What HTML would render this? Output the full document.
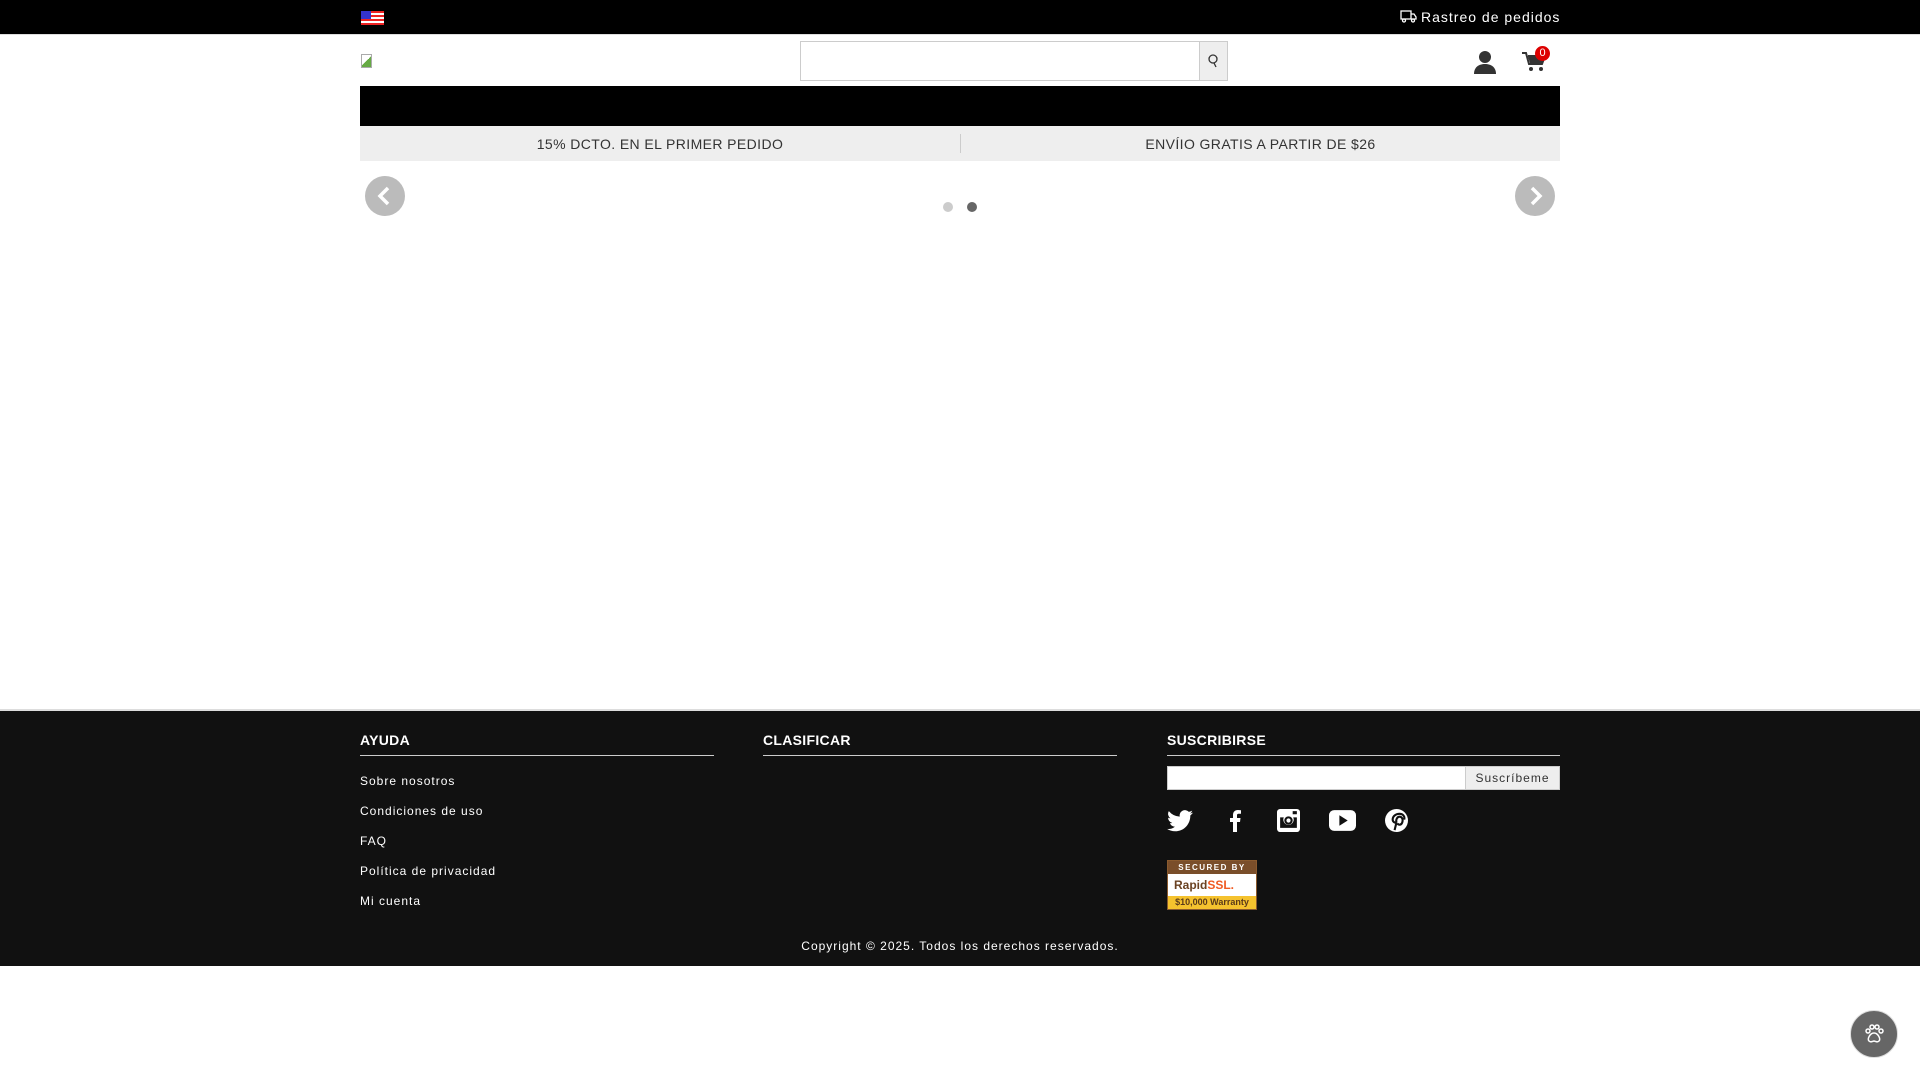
<!DOCTYPE html>
<html><head><meta charset="utf-8"><style>
*{margin:0;padding:0;box-sizing:border-box}
body{width:1920px;height:1080px;background:#fff;font-family:"Liberation Sans",sans-serif;position:relative;overflow:hidden}
.a{position:absolute}
.top{left:0;top:0;width:1920px;height:35px;background:#000;border-bottom:1px solid #ddd}
.ft{left:0;top:709px;width:1920px;height:257px;background:#111;border-top:2px solid #ddd}
.h{color:#fff;font-weight:bold;font-size:14px;letter-spacing:.3px}
.ln{left:0;height:1px;background:#ccc}
.lk{color:#fff;font-size:12px;letter-spacing:1px}
.arr{width:40px;height:40px;border-radius:50%;background:#bbb}
</style></head><body>
<div class="a top"></div>
<div class="a" style="left:361px;top:11px;width:23px;height:14px;background:repeating-linear-gradient(#e22 0 2px,#fff 2px 4px)"><div style="width:10px;height:8px;background:#33c"></div></div>
<div class="a" style="left:1400px;top:9px;color:#fff;font-size:14px;letter-spacing:1px">
<svg width="17" height="13" viewBox="0 0 17 13" style="vertical-align:-1px;margin-right:4px" fill="none" stroke="#fff" stroke-width="1.3"><rect x="1" y="1" width="10" height="8"/><path d="M11 4h3l2 3v2h-5"/><circle cx="4" cy="10.5" r="1.5"/><circle cx="13" cy="10.5" r="1.5"/></svg>Rastreo de pedidos</div>
<div class="a" style="left:361px;top:54px;width:11px;height:14px;border:1px solid #aaa;background:linear-gradient(135deg,#fff 50%,#6a4 50%)"></div>
<div class="a" style="left:800px;top:41px;width:428px;height:40px;border:1px solid #ccc;background:#fff"></div>
<div class="a" style="left:1199px;top:41px;width:29px;height:40px;border:1px solid #ccc;background:#eee"></div>
<svg class="a" style="left:1207px;top:54px" width="12" height="14" viewBox="0 0 12 14" fill="none" stroke="#333" stroke-width="1.3"><circle cx="6" cy="5" r="4"/><path d="M7 9l2 4"/></svg>
<svg class="a" style="left:1473px;top:50px" width="24" height="24" viewBox="0 0 24 24" fill="#333"><circle cx="12" cy="7" r="6"/><path d="M1 24c0-7 5-10 11-10s11 3 11 10z"/></svg>
<svg class="a" style="left:1522px;top:52px" width="24" height="20" viewBox="0 0 24 20" fill="#333"><path d="M0 1h4l3 11h13l3-8H6" stroke="#333" stroke-width="2" fill="none"/><path d="M6 5h16l-2 6H8z"/><circle cx="9" cy="17" r="2"/><circle cx="19" cy="17" r="2"/></svg>
<div class="a" style="left:1535px;top:46px;width:15px;height:15px;border-radius:50%;background:#d00;color:#fff;font-size:11px;text-align:center;line-height:15px">0</div>
<div class="a" style="left:360px;top:86px;width:1200px;height:40px;background:#000"></div>
<div class="a" style="left:360px;top:126px;width:1200px;height:35px;background:#eee"></div>
<div class="a" style="left:960px;top:134px;width:1px;height:19px;background:#ccc"></div>
<div class="a" style="left:360px;top:136px;width:600px;text-align:center;font-size:14px;color:#333;letter-spacing:.4px">15% DCTO. EN EL PRIMER PEDIDO</div>
<div class="a" style="left:961px;top:136px;width:599px;text-align:center;font-size:14px;color:#333;letter-spacing:.4px">ENVÍIO GRATIS A PARTIR DE $26</div>
<div class="a arr" style="left:365px;top:176px"><svg width="40" height="40" viewBox="0 0 40 40"><path d="M23 12l-8 8 8 8" stroke="#fff" stroke-width="3.5" fill="none"/></svg></div>
<div class="a arr" style="left:1515px;top:176px"><svg width="40" height="40" viewBox="0 0 40 40"><path d="M17 12l8 8-8 8" stroke="#fff" stroke-width="3.5" fill="none"/></svg></div>
<div class="a" style="left:943px;top:202px;width:10px;height:10px;border-radius:50%;background:#ccc"></div>
<div class="a" style="left:967px;top:202px;width:10px;height:10px;border-radius:50%;background:#666"></div>
<div class="a ft"></div>
<div class="a h" style="left:360px;top:732px">AYUDA</div>
<div class="a h" style="left:763px;top:732px">CLASIFICAR</div>
<div class="a h" style="left:1167px;top:732px">SUSCRIBIRSE</div>
<div class="a ln" style="left:360px;top:755px;width:354px"></div>
<div class="a ln" style="left:763px;top:755px;width:354px"></div>
<div class="a ln" style="left:1167px;top:755px;width:393px"></div>
<div class="a lk" style="left:360px;top:774px">Sobre nosotros</div>
<div class="a lk" style="left:360px;top:804px">Condiciones de uso</div>
<div class="a lk" style="left:360px;top:834px">FAQ</div>
<div class="a lk" style="left:360px;top:864px">Política de privacidad</div>
<div class="a lk" style="left:360px;top:894px">Mi cuenta</div>
<div class="a" style="left:1167px;top:766px;width:299px;height:24px;background:#fff;border:1px solid #ccc"></div>
<div class="a" style="left:1465px;top:766px;width:95px;height:24px;background:#eee;border:1px solid #ccc;font-size:12px;color:#333;text-align:center;line-height:22px;letter-spacing:1px">Suscríbeme</div>
<svg class="a" style="left:1167px;top:810px" width="26" height="22" viewBox="0 0 24 20" fill="#fff"><path d="M24 2.3a10 10 0 0 1-2.8.8A5 5 0 0 0 23.3.4a10 10 0 0 1-3.1 1.2A4.9 4.9 0 0 0 11.8 6 14 14 0 0 1 1.7.9a4.9 4.9 0 0 0 1.5 6.6A4.9 4.9 0 0 1 1 6.9a4.9 4.9 0 0 0 3.9 4.9 5 5 0 0 1-2.2.1 4.9 4.9 0 0 0 4.6 3.4A9.9 9.9 0 0 1 0 17.3 14 14 0 0 0 7.5 19.5c9 0 14-7.5 14-14v-.6A10 10 0 0 0 24 2.3z"/></svg>
<svg class="a" style="left:1228px;top:810px" width="14" height="22" viewBox="0 0 12 22" fill="#fff"><path d="M8 22V12h3l.5-4H8V5.5C8 4.4 8.3 3.7 9.9 3.7H12V.2A25 25 0 0 0 8.9 0C5.9 0 4 1.8 4 5.2V8H1v4h3v10z"/></svg>
<svg class="a" style="left:1277px;top:809px" width="23" height="23" viewBox="0 0 22 22" fill="#fff"><path d="M3 0h16a3 3 0 0 1 3 3v16a3 3 0 0 1-3 3H3a3 3 0 0 1-3-3V3a3 3 0 0 1 3-3zm0 8v10h16V8h-3.5a5 5 0 1 1-9 0zm8-1a4 4 0 1 0 0 8 4 4 0 0 0 0-8zm0 2a2 2 0 1 1 0 4 2 2 0 0 1 0-4zM15 2v3h4V2z"/></svg>
<svg class="a" style="left:1329px;top:810px" width="27" height="21" viewBox="0 0 26 20" fill="#fff"><rect width="26" height="20" rx="5"/><path d="M10 5v10l8-5z" fill="#111"/></svg>
<svg class="a" style="left:1385px;top:809px" width="23" height="23" viewBox="0 0 24 24"><circle cx="12" cy="12" r="12" fill="#fff"/><path d="M10 22l2-8m0 0c-1-3 1-6 3-6 3 0 4 3 3 6s-4 3-5 1M12 14c-2 1-4-1-4-3 0-4 4-6 7-6 4 0 6 3 5 6" stroke="#111" stroke-width="2.2" fill="none"/></svg>
<div class="a" style="left:1167px;top:860px;width:90px;height:50px;border:1px solid #8a5a2e;background:#fff">
<div style="background:#7a4e2a;color:#fff;font-size:8px;font-weight:bold;letter-spacing:1.5px;text-align:center;height:13px;line-height:13px">SECURED BY</div>
<div style="font-size:12px;font-weight:bold;color:#6a4222;padding-left:6px;height:22px;line-height:22px">Rapid<span style="color:#f05a22">SSL.</span></div>
<div style="background:#f5c22e;color:#5a3a1a;font-size:9px;font-weight:bold;text-align:center;height:13px;line-height:13px">$10,000 Warranty</div></div>
<div class="a" style="left:0;top:939px;width:1920px;text-align:center;color:#fff;font-size:12px;letter-spacing:1px">Copyright © 2025. Todos los derechos reservados.</div>
<div class="a" style="left:1850px;top:1010px;width:48px;height:48px;border-radius:50%;background:#666;border:1px solid #ddd"></div>
<svg class="a" style="left:1862px;top:1022px" width="24" height="24" viewBox="0 0 24 24" fill="none" stroke="#fff" stroke-width="1.5"><circle cx="6" cy="9" r="2"/><circle cx="10" cy="5" r="2"/><circle cx="15" cy="5" r="2"/><circle cx="19" cy="9" r="2"/><path d="M12 11c-4 0-7 6-5 8s4 0 5 0 3 2 5 0-1-8-5-8z"/></svg>
</body></html>
